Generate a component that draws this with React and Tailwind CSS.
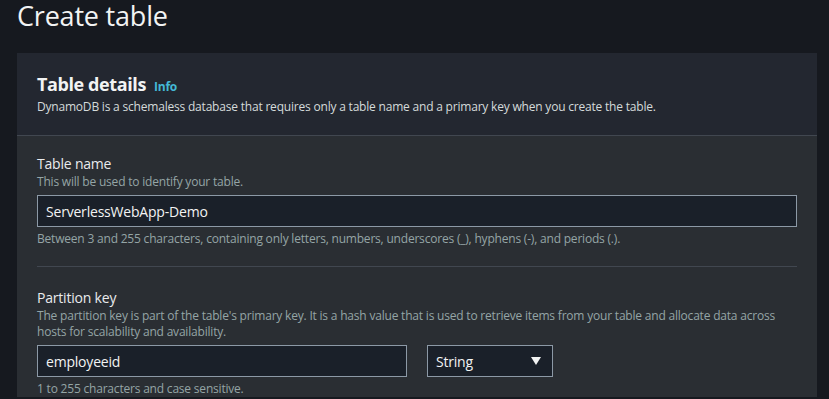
export default function App() {
  return (
    <main
      className="h-[399px] w-[829px] overflow-hidden bg-[#16191f] text-[#d1d5db]"
      style={{ fontFamily: '"Open Sans", "Noto Sans", sans-serif' }}
    >
      <h1 className="pl-[17px] pt-[1px] text-[27px] font-normal leading-[30px] tracking-[-0.2px] text-[#f2f3f3]">Create table</h1>

      <section className="ml-[17px] mt-[22px] w-[800px] bg-[#2a2e33] tracking-[-0.2px]">
        <header className="border-b border-[#414750] bg-[#232730] px-[20px] pb-[20px] pt-[20px]">
          <div className="flex items-baseline gap-[8px]">
            <h2 className="text-[18px] font-bold leading-[22px] tracking-[-0.4px] text-[#f2f3f3]">Table details</h2>
            <span className="text-[12px] font-bold text-[#44b9d6]">Info</span>
          </div>
          <p className="mt-[3px] text-[12px] leading-[16px] text-[#d5dbdb]">
            DynamoDB is a schemaless database that requires only a table name and a primary key when you create the table.
          </p>
        </header>

        <div className="px-[20px] pt-[18px]">
          <label className="block text-[14px] leading-[20px] text-[#e9ebed]">Table name</label>
          <p className="text-[12px] leading-[16px] text-[#95a5a6]">This will be used to identify your table.</p>
          <div className="mt-[5px] flex h-[32px] w-[760px] items-center border border-[#8c99a6] bg-[#1a2029] px-[8px] text-[14px] text-[#f2f3f3]">
            ServerlessWebApp-Demo
          </div>
          <p className="mt-[4px] text-[12px] leading-[16px] text-[#95a5a6]">
            Between 3 and 255 characters, containing only letters, numbers, underscores (_), hyphens (-), and periods (.).
          </p>

          <div className="mt-[19px] w-[760px] border-t border-[#414750]" />

          <label className="mt-[21px] block text-[14px] leading-[20px] text-[#e9ebed]">Partition key</label>
          <p className="w-[760px] text-[12px] leading-[16px] text-[#95a5a6]">
            The partition key is part of the table's primary key. It is a hash value that is used to retrieve items from your table and allocate data across hosts for scalability and availability.
          </p>
          <div className="mt-[5px] flex gap-[20px]">
            <div className="flex h-[32px] w-[370px] items-center border border-[#8c99a6] bg-[#1a2029] px-[8px] text-[14px] text-[#f2f3f3]">
              employeeid
            </div>
            <div className="flex h-[32px] w-[126px] items-center justify-between border border-[#8c99a6] bg-[#1a2029] pl-[8px] pr-[11px] text-[14px] text-[#f2f3f3]">
              String
              <svg width="10" height="8" viewBox="0 0 10 8">
                <path d="M0 0h10L5 8z" fill="#f2f3f3" />
              </svg>
            </div>
          </div>
          <p className="mt-[4px] text-[12px] leading-[16px] text-[#95a5a6]">1 to 255 characters and case sensitive.</p>
        </div>
      </section>
    </main>
  );
}
